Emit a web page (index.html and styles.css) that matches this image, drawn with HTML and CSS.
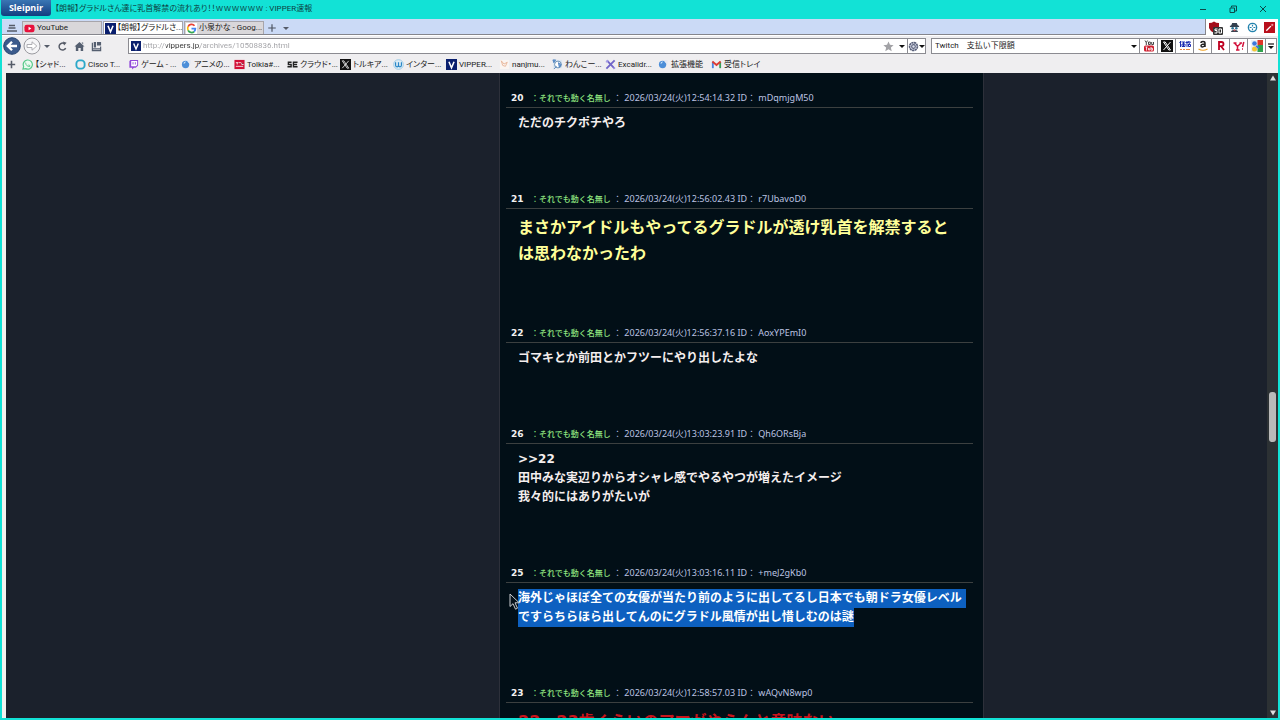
FILE: index.html
```html
<!DOCTYPE html>
<html lang="ja">
<head>
  <meta charset="UTF-8">
  <title>【朗報】グラドルさん達に乳首解禁の流れあり！！ｗｗｗｗｗｗ : VIPPER速報</title>
  <meta name="viewport" content="width=device-width,initial-scale=1">
  <link rel="stylesheet" href="styles.css">
</head>
<body>
  <header class="titlebar">
    <button class="logo">Sleipnir</button>
    <span class="title">【朗報】グラドルさん達に乳首解禁の流れあり！！ｗｗｗｗｗｗ : VIPPER速報</span>
    <div class="winbtns">
      <button aria-label="最小化"><svg viewBox="0 0 10 10"><path d="M2 5.500h6" stroke="#0b4a4a" fill="none"/></svg></button>
      <button aria-label="元に戻す"><svg viewBox="0 0 10 10"><path d="M2 4h4.500v4.500H2zM3.500 3.500v-1.500h5v5H7" stroke="#0b4a4a" fill="none"/></svg></button>
      <button aria-label="閉じる"><svg viewBox="0 0 10 10"><path d="M2 2l6 6M8 2l-6 6" stroke="#0b4a4a" fill="none"/></svg></button>
    </div>
  </header>

  <div class="chrome">
    <div class="tabrow">
      <nav class="tabs">
        <button class="tabmenu" aria-label="タブ一覧"><svg viewBox="0 0 12 12"><path d="M3 3.500h6M2.500 6h7M1 9h10" stroke="#555b68" stroke-width="1.300" fill="none"/></svg></button>
        <button class="tab"><svg viewBox="0 0 12 12"><rect x="0.500" y="2" width="11" height="8" rx="2.500" fill="#e8103c"/><path d="M5 4.200v3.600L8 6z" fill="#fff"/></svg>YouTube</button>
        <button class="tab active"><svg viewBox="0 0 12 12"><rect width="12" height="12" fill="#0a1f6e"/><path d="M3.200 3l2.800 6.500L8.800 3" stroke="#fff" stroke-width="1.700" fill="none"/></svg>【朗報】グラドルさ...</button>
        <button class="tab"><svg viewBox="0 0 12 12"><rect width="12" height="12" fill="#fff"/><g fill="none" stroke-width="1.900"><path d="M9.300 3A4.200 4.200 0 0 0 2.300 4" stroke="#e94235"/><path d="M2.300 4a4.200 4.200 0 0 0 0 4" stroke="#fabb05"/><path d="M2.300 8a4.200 4.200 0 0 0 6.600 1.300" stroke="#34a853"/><path d="M8.900 9.300a4.200 4.200 0 0 0 1.300-3.200H6" stroke="#4285f4"/></g></svg>小泉かな - Goog...</button>
        <button class="newtab" aria-label="新しいタブ"><svg viewBox="0 0 12 12"><path d="M6 1.500v9M1.500 6h9" stroke="#4c5260" stroke-width="1.400"/></svg></button>
        <button class="caret" aria-label="タブメニュー"></button>
      </nav>
      <div class="exts">
        <button aria-label="ブロッカー"><svg class="wide" viewBox="0 0 14 14"><path d="M0 2q3 0 5-1.500Q7 2 10 2v5q-1 3-5 5-4-2-5-5z" fill="#a30d1a"/><rect x="4" y="6" width="10" height="8" rx="1" fill="#333"/><path d="M8.500 8H6v1.500h2v2.500H5.500M10 8h2.500v4H10z" stroke="#fff" fill="none"/></svg></button>
        <button aria-label="エージェント"><svg viewBox="0 0 12 12"><path d="M2 4.500L3.500 1h5L10 4.500z" fill="#34404f"/><rect x="1" y="4" width="10" height="1.500" fill="#34404f"/><circle cx="4" cy="6.800" r="1.400" fill="#2b7193"/><circle cx="8" cy="6.800" r="1.400" fill="#2b7193"/><path d="M2 11q1-3 4-2 3-1 4 2z" fill="#34404f"/><path d="M5 8h2v2H5z" fill="#c0555b"/></svg></button>
        <button aria-label="ターゲット"><svg viewBox="0 0 12 12"><circle cx="6" cy="6" r="4.500" fill="#fff" stroke="#2483ad" stroke-width="1.500"/><path d="M6 3v2M6 7v2M3 6h2M7 6h2" stroke="#2483ad" stroke-width="1.300"/></svg></button>
        <button aria-label="ハイライト"><svg viewBox="0 0 12 12"><rect width="12" height="12" fill="#b90f1c"/><path d="M2.500 9.500l5-5" stroke="#fff" stroke-width="1.500"/><path d="M9 2v2.500M7.700 3.200h2.600" stroke="#f6c9c9" stroke-width="0.800"/></svg></button>
      </div>
    </div>

    <div class="navrow">
      <div class="navbtns">
        <button class="round back" aria-label="戻る"><svg viewBox="0 0 18 18"><circle cx="9" cy="9" r="8.300" fill="#3b5a8c" stroke="#24426e"/><path d="M14 9H5.500M9 4.800L4.800 9 9 13.200" stroke="#fff" stroke-width="2.300" fill="none"/></svg></button>
        <button class="round" aria-label="進む"><svg viewBox="0 0 18 18"><circle cx="9" cy="9" r="8" fill="#f5f5f7" stroke="#9a9aa0"/><path d="M4 7.500h5V4.800L13.800 9 9 13.200v-2.700H4z" fill="#fff" stroke="#a6a6ac" stroke-width="0.900"/></svg></button>
        <button class="caret" aria-label="履歴"></button>
        <button class="tool" aria-label="更新"><svg viewBox="0 0 12 12"><path d="M9.500 7.800A3.800 3.800 0 1 1 8 2.800" stroke="#555a66" stroke-width="1.600" fill="none"/><path d="M6.500 0.500l4 1.500-2.800 3z" fill="#555a66"/></svg></button>
        <button class="tool" aria-label="ホーム"><svg viewBox="0 0 12 12"><path d="M6 1l5.500 5H10v5H7.300V7.500H4.700V11H2V6H0.500zM8.500 1.500H10v2l-1.500-1.300z" fill="#555f70"/></svg></button>
        <button class="tool" aria-label="ブックマーク"><svg viewBox="0 0 12 12"><path d="M1.500 2v8.500h9V6M1.500 8.500h9" stroke="#555f70" stroke-width="1.300" fill="none"/><path d="M3 1h2.500v6H3zM6.500 1H11v4H6.500z" fill="#555f70"/></svg></button>
      </div>
      <div class="address">
        <svg class="favicon" viewBox="0 0 12 12"><rect width="12" height="12" fill="#0a1f6e"/><path d="M3.200 3l2.800 6.500L8.800 3" stroke="#fff" stroke-width="1.700" fill="none"/></svg>
        <input class="url" type="text" aria-label="アドレス" value="http://vippers.jp/archives/10508836.html">
        <button class="tool" aria-label="お気に入り"><svg viewBox="0 0 12 12"><path d="M6 0.500l1.600 3.700 4 .3-3 2.700.9 4L6 9.100l-3.500 2.100.9-4-3-2.700 4-.3z" fill="#a2a2a6"/></svg></button>
        <button class="caret dark" aria-label="アドレス履歴"></button>
        <button class="engine" aria-label="エンジン"><svg viewBox="0 0 12 12"><circle cx="6" cy="6" r="4.300" fill="#dfe2ef" stroke="#59607a" stroke-width="1.800" stroke-dasharray="2.400 0.500"/><circle cx="6" cy="6" r="2" fill="none" stroke="#59607a" stroke-width="1.200"/></svg><i class="caret dark"></i></button>
      </div>
      <div class="search">
        <input type="text" aria-label="検索" value="Twitch　支払い下限額">
        <button class="caret dark" aria-label="検索履歴"></button>
      </div>
      <div class="sites">
        <button aria-label="YouTube"><svg viewBox="0 0 12 12"><path d="M2 0.500l1.300 2 1.300-2M3.300 2.500V5M5.500 2h1.800v2.500H5.500zM8.700 2v2.500h1.800V2" stroke="#333" fill="none" stroke-width="0.900"/><rect x="1" y="5.500" width="10" height="6" rx="1.500" fill="#cf2030"/><path d="M2.500 7h2M3.500 7v3.500M5.500 8v2h1.300V8M8 7v3.200h1.500V8.300H8" stroke="#fff" fill="none" stroke-width="0.800"/></svg></button>
        <button aria-label="X"><svg viewBox="0 0 12 12"><rect width="12" height="12" fill="#111"/><path d="M2.500 2h1.700l5.300 8H7.800zM9.500 2l-7 8" stroke="#fff" fill="none"/></svg></button>
        <button aria-label="価格.com"><svg viewBox="0 0 12 12"><path d="M1.500 1v6M0.500 3l1.500-2M2.500 2h3.500M3 4h3v2.500H3zM4.500 2v4.500M8 1v6M6.500 2.500h2.800M10 1L9 3M9.500 2h2L9 5M9.500 4.500h2v2h-2z" stroke="#1b2cb0" fill="none"/><path d="M1 9.500h2M4 9.500h2M7 9.500h4" stroke="#e88643"/></svg></button>
        <button aria-label="Amazon"><svg viewBox="0 0 12 12"><path d="M4 3Q4 1.500 6 1.500t2 1.700V7M8 4Q4 4 4 5.800 4 7 5.500 7T8 5" stroke="#222" stroke-width="1.500" fill="none"/><path d="M1.500 9q4.500 2.500 9 0" stroke="#f0a020" stroke-width="1.200" fill="none"/></svg></button>
        <button aria-label="楽天"><svg viewBox="0 0 12 12"><path d="M4 10V2h2.500q2 0 2 2T6.500 6.200H4M6 6.200L9 10" stroke="#bf0020" stroke-width="1.800" fill="none"/></svg></button>
        <button aria-label="Yahoo!"><svg viewBox="0 0 12 12"><path d="M0.500 3h3M1.500 3l3 3.500L8 3M6.500 3H9M4.500 6v4M3 10h3.500" stroke="#d3133c" stroke-width="1.500" fill="none"/><path d="M10.800 2L9.500 7M9 9h1" stroke="#d3133c" stroke-width="1.500"/></svg></button>
        <button aria-label="Google"><svg viewBox="0 0 12 12"><rect x="0" y="0" width="12" height="12" fill="#eef1f5"/><rect x="6.500" y="0" width="5.500" height="5" fill="#df3728"/><rect x="6.500" y="5" width="5.500" height="7" fill="#2fa24d"/><circle cx="3.500" cy="3.500" r="2.300" fill="#3b78dc"/><circle cx="3.500" cy="9" r="2.500" fill="#f2c433"/><path d="M5 6l3 2" stroke="#3b78dc" stroke-width="2"/></svg></button>
        <button class="last" aria-label="その他"><svg viewBox="0 0 8 12"><path d="M1 4h6" stroke="#111" stroke-width="1.200"/><path d="M1 6h6L4 9z" fill="#111"/></svg></button>
      </div>
    </div>

    <nav class="bookmarks">
      <button class="addmark" aria-label="追加"><svg viewBox="0 0 12 12"><path d="M6 2v8M2 6h8" stroke="#555b68" stroke-width="1.700"/></svg></button>
      <a href="#"><svg viewBox="0 0 12 12"><path d="M1 11l.8-2.800A5 5 0 1 1 4 10.500z" fill="#eafaf0" stroke="#56c98a" stroke-width="1.300"/><path d="M4 4q0 4 4.500 4.200V7L7 6.500" stroke="#56c98a" fill="none"/></svg>【シャド...</a>
      <a href="#"><svg viewBox="0 0 12 12"><rect x="1.500" y="1.500" width="9" height="9" rx="3.500" fill="none" stroke="#2ba8c9" stroke-width="2"/></svg>Cisco T...</a>
      <a href="#"><svg viewBox="0 0 12 12"><path d="M2.500 1H11v6L8.500 9.500H6.500l-2 2v-2H1.500V2.500z" fill="#9147d9"/><path d="M3.500 2.200H10v4.300L8.500 8H3.500z" fill="#fff"/><path d="M5.500 3.500v2.500M8 3.500v2.500" stroke="#9147d9"/></svg>ゲーム - ...</a>
      <a href="#"><svg viewBox="0 0 12 12"><circle cx="5" cy="6" r="4" fill="#4c8ed8"/><path d="M2.500 5q1-2.500 3-2.200L4 5z" fill="#d5e9fb"/><path d="M6 1h4.500v4.500Q8 5 6 1z" fill="#e3e8f2"/></svg>アニメの...</a>
      <a href="#"><svg viewBox="0 0 12 12"><rect x="0.500" y="1" width="11" height="10" fill="#d10f36"/><path d="M2 4h3M3.500 4v2M5.500 4h2M8.500 4v2h2M2 8h8" stroke="#fff" stroke-width="0.900"/></svg>Tolkia#...</a>
      <a href="#"><svg viewBox="0 0 12 12"><path d="M5 3.500H1.500V6H4.500V8.500H0.500M11.500 3.500H7v5h4.500M7 6h4" stroke="#222" stroke-width="1.500" fill="none"/></svg>クラウド・...</a>
      <a href="#"><svg viewBox="0 0 12 12"><rect width="12" height="12" fill="#111"/><path d="M2.500 2h1.700l5.300 8H7.800zM9.500 2l-7 8" stroke="#ddd" fill="none"/></svg>トルキア...</a>
      <a href="#"><svg viewBox="0 0 12 12"><circle cx="6" cy="6" r="5.300" fill="#dcecf5" stroke="#9ccbe5"/><path d="M2.800 3.500v3q0 2 1.600 2T6 6.500v-3M6 6.500q0 2 1.600 2t1.600-2v-3" stroke="#2886c7" stroke-width="1.300" fill="none"/></svg>インター...</a>
      <a href="#"><svg viewBox="0 0 12 12"><rect width="12" height="12" fill="#0a1f6e"/><path d="M3.200 3l2.800 6.500L8.800 3" stroke="#fff" stroke-width="1.700" fill="none"/></svg>VIPPER...</a>
      <a href="#"><svg viewBox="0 0 12 12"><rect x="1" y="1" width="10" height="10" fill="#fbf5f1"/><path d="M2.500 2l3 3.500L9 3.500 7 8l-3-1z" fill="none" stroke="#e8b597"/></svg>nanjmu...</a>
      <a href="#"><svg viewBox="0 0 12 12"><path d="M1 1h10v9H1z" fill="#dce7f2"/><circle cx="6.500" cy="6" r="3.700" fill="#fff" stroke="#5c87ae"/><path d="M1 1h3L2 4zM2 11l3-3M7 4l3 2-2 3z" stroke="#5183bd" fill="#72a2df"/></svg>わんこー...</a>
      <a href="#"><svg viewBox="0 0 12 12"><path d="M2 1.500l8.500 9M10.500 1.500l-9 9" stroke="#7165c9" stroke-width="2"/><path d="M1 3.500l2.500-2M9 10.500l2-1" stroke="#a79ee6" stroke-width="1.500"/></svg>Excalidr...</a>
      <a href="#"><svg viewBox="0 0 12 12"><circle cx="5" cy="6" r="4" fill="#4c8ed8"/><path d="M2.500 5q1-2.500 3-2.200L4 5z" fill="#d5e9fb"/><path d="M6 1h4.500v4.500Q8 5 6 1z" fill="#e3e8f2"/></svg>拡張機能</a>
      <a href="#"><svg viewBox="0 0 12 12"><path d="M2 10V3" stroke="#4c83e0" stroke-width="2"/><path d="M10 10V3" stroke="#39a057" stroke-width="2"/><path d="M1.500 2.800L6 6.500l4.500-3.700" stroke="#dd3b32" stroke-width="2" fill="none"/></svg>受信トレイ</a>
    </nav>
  </div>

  <div class="viewport">
    <main class="page">
      <section class="thread">
        <article class="post">
          <h2><b>20</b><span class="name">：それでも動く名無し</span><span>： 2026/03/24(火)12:54:14.32 ID： mDqmjgM50</span></h2>
          <p>ただのチクポチやろ</p>
        </article>
        <article class="post">
          <h2><b>21</b><span class="name">：それでも動く名無し</span><span>： 2026/03/24(火)12:56:02.43 ID： r7UbavoD0</span></h2>
          <p class="big yellow">まさかアイドルもやってるグラドルが透け乳首を解禁すると<br>は思わなかったわ</p>
        </article>
        <article class="post">
          <h2><b>22</b><span class="name">：それでも動く名無し</span><span>： 2026/03/24(火)12:56:37.16 ID： AoxYPEmI0</span></h2>
          <p>ゴマキとか前田とかフツーにやり出したよな</p>
        </article>
        <article class="post">
          <h2><b>26</b><span class="name">：それでも動く名無し</span><span>： 2026/03/24(火)13:03:23.91 ID： Qh6ORsBja</span></h2>
          <p>&gt;&gt;22<br>田中みな実辺りからオシャレ感でやるやつが増えたイメージ<br>我々的にはありがたいが</p>
        </article>
        <article class="post">
          <h2><b>25</b><span class="name">：それでも動く名無し</span><span>： 2026/03/24(火)13:03:16.11 ID： +meJ2gKb0</span></h2>
          <p><mark class="wrap">海外じゃほぼ全ての女優が当たり前のように出してるし日本でも朝ドラ女優レベル</mark><mark>ですらちらほら出してんのにグラドル風情が出し惜しむのは謎</mark></p>
          <svg class="cursor" viewBox="0 0 12 18"><path d="M1 1v12.500l3-2.800 2.500 5.500 2-1L6 9.800h4.200z" fill="#06121a" stroke="#c9cdd0"/></svg>
        </article>
        <article class="post">
          <h2><b>23</b><span class="name">：それでも動く名無し</span><span>： 2026/03/24(火)12:58:57.03 ID： wAQvN8wp0</span></h2>
          <p class="big red">22、23歳くらいのアマがやらんと意味ない</p>
        </article>
      </section>
    </main>
    <div class="scrollbar">
      <svg viewBox="0 0 10 10"><path d="M2 7.500L5 2.500l3 5z" fill="#dcdcdc"/></svg>
      <div class="track"><div class="thumb"></div></div>
      <svg viewBox="0 0 10 10"><path d="M2 2.500L5 7.500l3-5z" fill="#dcdcdc"/></svg>
    </div>
  </div>
</body>
</html>
```
FILE: styles.css
```css
*{box-sizing:border-box;}
body{margin:0;height:100vh;display:flex;flex-direction:column;overflow:hidden;background:#12e2d6;font:8px/12px Roboto,"Noto Sans CJK JP",sans-serif;color:#222;}
button{padding:0;border:0;background:none;font:inherit;color:inherit;display:flex;align-items:center;justify-content:center;flex:none;}
input{border:0;padding:0;background:none;font:inherit;color:#222;min-width:0;flex:1;outline:none;}
svg{display:block;width:12px;height:12px;flex:none;}
a{color:inherit;text-decoration:none;}

/* title bar */
.titlebar{display:flex;align-items:flex-start;height:19px;flex:none;padding-left:1px;}
.logo{width:50px;height:16px;background:linear-gradient(#3a76b4,#123d80);border-radius:0 0 3px 3px;color:#fff;font-family:"Open Sans",sans-serif;font-size:9px;font-weight:bold;}
.title{flex:1;line-height:18px;margin-left:4px;white-space:nowrap;font-feature-settings:"palt";color:#0d4444;}
.winbtns{display:flex;padding-right:2px;}
.winbtns button{width:30px;height:18px;}
.winbtns svg{width:10px;height:10px;}

/* toolbars */
.chrome{flex:none;margin:0 2px;background:#efeef0;}
.tabrow{display:flex;height:17px;background:#fff;}
.tabs{flex:1;display:flex;align-items:flex-end;background:#cbdaf6;border-bottom:1px solid #85858c;border-right:1px solid #85858c;margin-bottom:1px;padding-left:2px;}
.tabmenu{width:16px;height:13px;margin-right:2px;}
.tab{width:80px;height:13px;margin-right:1px;padding-left:1px;gap:1px;justify-content:flex-start;background:#d9d7da;border:1px solid #a7a5ab;border-bottom:0;white-space:nowrap;font-feature-settings:"palt";}
.tab svg{width:11px;height:11px;margin-right:1px;}
.tab.active{background:#fff;}
.tab.active svg{margin-right:0;}
.newtab{width:14px;height:13px;}
.newtab svg{width:10px;height:10px;}
.tabs .caret{margin:0 4px 4px;}
.exts{display:flex;width:72px;align-items:center;justify-content:space-around;}
.exts svg{width:11px;height:11px;}
.exts .wide{width:14px;height:14px;}
.caret{width:0;height:0;border:3px solid transparent;border-top-color:#555b68;border-bottom:0;}
.caret.dark{border-top-color:#111;}
.navrow{display:flex;align-items:center;height:20px;}
.navbtns{display:flex;align-items:center;width:126px;padding-left:1px;}
.round{width:18px;height:18px;margin-right:2px;}
.round svg{width:18px;height:18px;}
.navbtns .caret{margin:0 4px 0 1px;}
.navbtns .tool{width:17px;}
.tool svg,.engine svg{width:11px;height:11px;}
.address,.search,.sites{display:flex;align-items:center;height:16px;background:#fff;border:1px solid #8b8b91;}
.address{flex:1;padding-left:2px;}
.favicon{width:10px;height:10px;margin-right:2px;}
/* host part of the url is darker than the rest */
.url{color:transparent;background:linear-gradient(90deg,#a0a0a4 23px,#333 23px,#333 57px,#a0a0a4 57px);background-clip:text;-webkit-background-clip:text;}
.address .caret{margin-left:5px;}
.engine{height:14px;margin-left:2px;border-left:1px solid #8b8b91;}
.address .engine .caret{margin-left:0;}
.search{width:209px;margin-left:5px;padding:0 2px 0 3px;}
.sites{border-left:0;margin-right:1px;}
.sites button{width:18px;height:14px;border-right:1px solid #8b8b91;}
.sites .last{width:10px;border-right:0;}
.sites .last svg{width:8px;}
.bookmarks{display:flex;align-items:center;height:17px;}
.addmark{width:18px;margin-right:2px;}
.bookmarks a{display:flex;align-items:center;gap:2px;width:53px;white-space:nowrap;font-feature-settings:"palt";}
.bookmarks svg{width:11px;height:11px;}

/* page */
.viewport{flex:1;min-height:0;display:flex;margin:0 2px 2px;border-left:4px solid #f4f1ee;background:#1b212c;}
.page{flex:1;overflow:hidden;display:grid;grid-template-columns:493px 485px 1fr;}
.thread{grid-column:2;background:#020f17;border:solid #2d303a;border-width:0 1px;padding:16px 10px 0 6px;}
.post{position:relative;padding-bottom:57px;}
.post h2{display:flex;align-items:baseline;margin:0 0 6px;padding-left:5px;border-bottom:1px solid #3c4040;font:9px/18px "Noto Sans","Noto Sans CJK JP",sans-serif;color:#bcc3e2;white-space:nowrap;}
.post h2 b{width:20px;font-family:"DejaVu Sans",sans-serif;color:#f2f2f2;}
.post .name{width:82px;font-size:8px;font-weight:500;color:#90e680;}
.post p{margin:0 0 0 12px;font:bold 12px/19px "DejaVu Sans","Noto Sans CJK JP",sans-serif;color:#f4eeee;white-space:nowrap;}
.post p.big{font-size:16px;line-height:26px;}
.post p.yellow{color:#ffff99;}
.post p.red{color:#c9141c;}
mark{display:block;width:fit-content;background:#0d60c0;color:#fff;}
mark.wrap{padding-right:4px;}
.cursor{position:absolute;left:3px;top:29px;width:12px;height:18px;}
.scrollbar{display:flex;flex-direction:column;align-items:center;width:11px;background:#2c3134;}
.scrollbar svg{width:10px;height:10px;}
.track{flex:1;width:100%;padding:0 2px;display:grid;grid-template-rows:49.5% 50px 1fr;}
.thumb{grid-row:2;background:#b9b9b9;border-radius:3px;}
```
